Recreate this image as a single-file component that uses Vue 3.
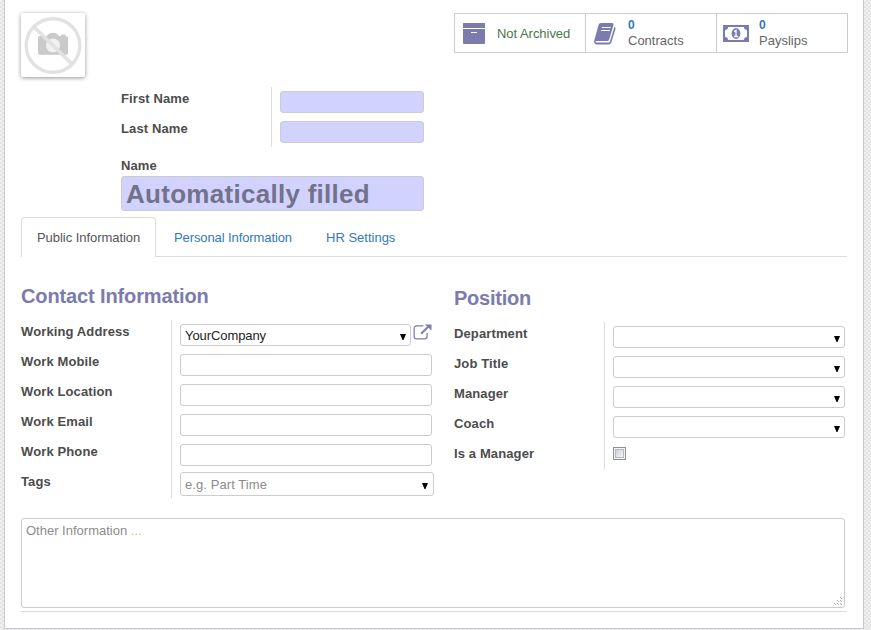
<script setup>
const contact = [
  { label: 'Working Address', kind: 'link', value: 'YourCompany' },
  { label: 'Work Mobile', kind: 'text' },
  { label: 'Work Location', kind: 'text' },
  { label: 'Work Email', kind: 'text' },
  { label: 'Work Phone', kind: 'text' },
  { label: 'Tags', kind: 'tags', placeholder: 'e.g. Part Time' }
]
const position = [
  { label: 'Department', kind: 'select' },
  { label: 'Job Title', kind: 'select' },
  { label: 'Manager', kind: 'select' },
  { label: 'Coach', kind: 'select' },
  { label: 'Is a Manager', kind: 'check' }
]
</script>

<template>
  <div class="page">
    <main class="sheet">
      <header class="top">
        <div class="photo">
          <svg width="64" height="64" viewBox="0 0 64 64">
            <path fill="#cacaca" d="M17 24.500q0-1.500 1.500-1.500H26q2-3.300 6-3.300t6 3.300h2v-1.500h4.500V23q2.500 0 2.500 1.500V40q0 1.800-1.800 1.800H18.800Q17 41.800 17 40z" />
            <circle cx="32" cy="32.500" r="7" fill="#f1f1f1" />
            <circle cx="32" cy="32.500" r="26.800" fill="none" stroke="#e2e2e2" stroke-width="3.400" />
            <path d="M13 14l38 37" stroke="#e2e2e2" stroke-width="3.600" />
          </svg>
        </div>
        <div class="stats">
          <div class="stat">
            <svg width="38" height="38" viewBox="0 0 38 38" fill="#7c7bad">
              <path d="M8 9h22v5H8z" />
              <path fill-rule="evenodd" d="M8 15H30v14q0 1-1 1H9q-1 0-1-1zM16 18h6v1h-6z" />
            </svg>
            <span class="archived">Not Archived</span>
          </div>
          <div class="stat">
            <svg width="38" height="38" viewBox="0 0 38 38">
              <path fill="#7c7bad" d="M15 9H26q2 0 1.500 2l-4.300 14.500q-.5 1.500-2 1.500H10.500q-1 0-1 .8 0 .8 1.200.8h11.600q1.200 0 1.600-1.200L28.400 13q1.600.5 1 2.300L25.300 28.500q-.6 1.900-2.700 1.900H11q-2.800 0-3-2.800L12.500 11q.6-2 2.500-2z" />
              <path stroke="#fff" stroke-width="1.200" d="M15.800 13.500h8.800M15 16.500h8.800" />
            </svg>
            <span class="figures"><b>0</b><span>Contracts</span></span>
          </div>
          <div class="stat">
            <svg width="38" height="38" viewBox="0 0 38 38">
              <path fill="#7c7bad" fill-rule="evenodd" d="M6 11h26v17H6zM11 13q0 3-3 3v7q3 0 3 3h16q0-3 3-3v-7q-3 0-3-3z" />
              <ellipse cx="19" cy="19.500" rx="4.400" ry="5.400" fill="#7c7bad" />
              <path fill="none" stroke="#fff" stroke-width="1.300" d="M17 17.600l2-1.200v5.800M17 22.500h4.200" />
            </svg>
            <span class="figures"><b>0</b><span>Payslips</span></span>
          </div>
        </div>
      </header>

      <section class="identity">
        <div class="names">
          <div class="name-labels"><label>First Name</label><label>Last Name</label></div>
          <div class="name-fields"><div class="box required"></div><div class="box required"></div></div>
        </div>
        <label class="name-label">Name</label>
        <div class="box required fullname">Automatically filled</div>
      </section>

      <nav class="tabs">
        <a class="tab active">Public Information</a>
        <a class="tab personal">Personal Information</a>
        <a class="tab settings">HR Settings</a>
      </nav>

      <div class="columns">
        <section class="group contact">
          <h2>Contact Information</h2>
          <div class="grid">
            <div class="labels"><label v-for="f in contact" :key="f.label">{{ f.label }}</label></div>
            <div class="fields">
              <div v-for="f in contact" :key="f.label" class="field" :class="f.kind">
                <div class="box">
                  <span class="value">{{ f.value }}</span>
                  <span class="hint">{{ f.placeholder }}</span>
                  <svg v-if="f.kind !== 'text'" class="arrow" width="6" height="6" viewBox="0 0 6 6"><path d="M0 0h6L3.500 6h-1z" /></svg>
                </div>
                <svg v-if="f.kind === 'link'" class="open" width="20" height="18" viewBox="0 0 20 18">
                  <path fill="none" stroke="#7c7bad" stroke-width="1.300" d="M11 2.600H3.800Q1.200 2.600 1.200 5.300v8.200q0 2.700 2.600 2.700h8.400q2.600 0 2.600-2.700V10" />
                  <path fill="none" stroke="#7c7bad" stroke-width="2" d="M8.500 10.800l7.500-7.300" />
                  <path fill="#7c7bad" d="M12.500 1H19.500v6.500z" />
                </svg>
              </div>
            </div>
          </div>
        </section>
        <section class="group position">
          <h2>Position</h2>
          <div class="grid">
            <div class="labels"><label v-for="f in position" :key="f.label">{{ f.label }}</label></div>
            <div class="fields">
              <div v-for="f in position" :key="f.label" class="field" :class="f.kind">
                <div v-if="f.kind === 'select'" class="box">
                  <svg class="arrow" width="6" height="6" viewBox="0 0 6 6"><path d="M0 0h6L3.500 6h-1z" /></svg>
                </div>
                <div v-else class="checkbox"><i></i></div>
              </div>
            </div>
          </div>
        </section>
      </div>

      <div class="notes">
        <span>Other Information <em>...</em></span>
        <svg class="grip" width="9" height="9" viewBox="0 0 9 9"><path fill="#aaa" d="M6 0h1v1H6zM7 1h1v1H7zM3 3h1v1H3zM4 4h1v1H4zM6 3h1v1H6zM7 4h1v1H7zM0 6h1v1H0zM1 7h1v1H1zM3 6h1v1H3zM4 7h1v1H4zM6 6h1v1H6zM7 7h1v1H7z" /></svg>
      </div>
      <div class="rule"></div>
    </main>
  </div>
</template>

<style>
body { margin: 0; }
</style>

<style scoped>
* { box-sizing: border-box; }
.page {
  height: 630px;
  padding: 0 7px 1px 4px;
  overflow: hidden;
  background: repeating-conic-gradient(#e3e3e3 0 25%, #f1f1f1 0 50%) 0 0 / 4px 4px;
  font: 13px/20px "Liberation Sans", Arial, sans-serif;
  color: #4c4c4c;
}
.sheet {
  height: 629px;
  padding: 13px 15px 0 16px;
  background: #fff;
  border: 1px solid #c8c8d3;
  border-top: 0;
}
.top { display: flex; justify-content: space-between; align-items: flex-start; height: 74px; }
.photo { width: 64px; height: 64px; border-radius: 2px; box-shadow: 0 1px 4px rgba(0, 0, 0, .42); }
.photo svg { display: block; }
.stats { display: flex; width: 394px; height: 40px; border: 1px solid #ccc; }
.stat { display: flex; flex: none; width: 131px; height: 38px; }
.stat:first-child { width: 130px; }
.stat + .stat { border-left: 1px solid #ccc; }
.stat svg { flex: none; }
.archived { padding-left: 4px; line-height: 39px; letter-spacing: -.04px; color: #4d754c; white-space: nowrap; }
.figures { display: flex; flex-direction: column; padding: 3px 0 0 4px; line-height: 16px; color: #666; }
.figures b { font-size: 12px; color: #337ab7; }
label { display: block; height: 30px; line-height: 23px; font-weight: bold; letter-spacing: .12px; white-space: nowrap; }
.identity { width: 303px; height: 130px; margin-left: 100px; }
.names { display: flex; height: 60px; }
.name-labels { width: 151px; border-right: 1px solid #ddd; }
.name-fields { flex: 1; display: grid; gap: 8px; align-content: start; padding: 4px 0 0 8px; }
.box { height: 22px; background: #fff; border: 1px solid #ccc; border-radius: 3px; }
.box.required { background: #d2d2ff; }
.name-label { height: 19px; line-height: 22px; margin-top: 8px; }
.identity .fullname { height: 35px; margin-top: 2px; padding-left: 4px; font-size: 26px; font-weight: bold; line-height: 34px; letter-spacing: .28px; color: #72728a; white-space: nowrap; }
.tabs { display: flex; height: 40px; width: 826px; border-bottom: 1px solid #ddd; }
.tab { height: 40px; line-height: 41px; letter-spacing: -.05px; color: #337ab7; white-space: nowrap; }
.tab.active { width: 135px; padding-left: 15px; line-height: 40px; background: #fff; border: 1px solid #ddd; border-bottom: 0; border-radius: 4px 4px 0 0; color: #555; }
.tab.personal { width: 152px; padding-left: 18px; line-height: 42px; letter-spacing: -.1px; }
.tab.settings { padding-left: 18px; line-height: 42px; letter-spacing: 0; }
.columns { display: flex; height: 261px; }
.group { width: 433px; }
.position { width: 391px; padding-top: 2px; }
h2 { height: 63px; margin: 0; padding-top: 27px; font-size: 20px; line-height: 24px; letter-spacing: -.12px; color: #7c7bad; }
.position h2 { letter-spacing: -.25px; }
.grid { display: flex; }
.labels { width: 151px; border-right: 1px solid #ddd; }
.contact .labels { height: 178px; }
.position .labels { height: 147px; }
.fields { flex: 1; padding: 4px 0 0 8px; }
.field { display: flex; height: 30px; width: 252px; }
.position .field { width: 232px; }
.field .box { display: flex; flex: 1; align-items: center; padding: 0 4px; }
.field.link .box { flex: none; width: 231px; }
.value { padding-top: 2px; letter-spacing: -.08px; color: #222; }
.hint { flex: 1; padding-top: 2px; letter-spacing: .08px; color: #8c8c8c; }
.arrow { flex: none; margin: 4px 0 0 auto; }
.open { margin: -1px 0 0 2px; }
.field.tags { width: 254px; margin-top: -2px; }
.tags .box { height: 24px; padding-right: 5px; }
.checkbox { width: 13px; height: 13px; margin-top: 1px; padding: 1px; border: 1px solid #8e8f8f; background: #f4f4f4; }
.checkbox i { display: block; height: 9px; border: 1px solid #b5bac0; background: linear-gradient(135deg, #cbcfd5, #f6f6f6); }
.notes { position: relative; width: 824px; height: 90px; padding: 2px 4px; border: 1px solid #ccc; border-radius: 3px; color: #8c8c8c; }
.notes em { font-style: normal; color: #d8c078; }
.grip { position: absolute; right: 1px; bottom: 1px; }
.rule { width: 826px; height: 4px; border-bottom: 1px solid #ddd; }
</style>
